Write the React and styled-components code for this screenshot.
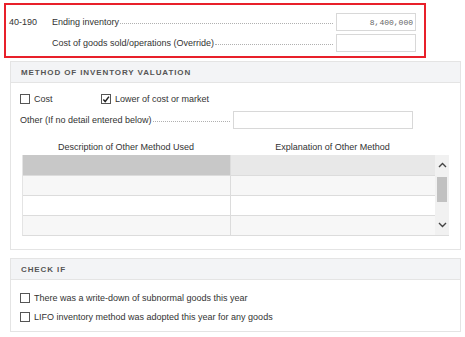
import React from "react";
import styled, { createGlobalStyle } from "styled-components";

const GlobalStyle = createGlobalStyle`
    body {
        margin: 0;
        background: #fff;
        font-family: "Liberation Sans", Arial, sans-serif;
        color: #333;
    }
`;

const tableRows = [
    { left: "#c8c8c8", right: "#e8e8e8" },
    { left: "#f7f7f7", right: "#f7f7f7" },
    { left: "#fff", right: "#fff" },
    { left: "#f7f7f7", right: "#f7f7f7" },
];

const CheckBox = ({ checked }) => (
    <Box>
        {checked && (
            <svg width="9" height="9" viewBox="0 0 9 9">
                <path
                    d="M1.5 4.5 L3.6 6.8 L7.8 1.2"
                    fill="none"
                    stroke="#222"
                    strokeWidth="1.6"
                />
            </svg>
        )}
    </Box>
);

const Chevron = ({ up }) => (
    <svg width="9" height="6" viewBox="0 0 9 6">
        <path
            d={up ? "M1 5 L4.5 1.5 L8 5" : "M1 1 L4.5 4.5 L8 1"}
            fill="none"
            stroke="#444"
            strokeWidth="1.4"
        />
    </svg>
);

const App = () => {
    return (
        <Page>
            <GlobalStyle />
            <Highlight>
                <LineRow>
                    <Code>40-190</Code>
                    <Label>
                        <span>Ending inventory</span>
                        <Leader />
                    </Label>
                    <Input value="8,400,000" readOnly />
                </LineRow>
                <LineRow>
                    <Code />
                    <Label>
                        <span>Cost of goods sold/operations (Override)</span>
                        <Leader />
                    </Label>
                    <Input value="" readOnly />
                </LineRow>
            </Highlight>

            <Panel>
                <PanelHeader>Method of inventory valuation</PanelHeader>
                <PanelBody>
                    <CheckRow>
                        <CheckItem width="81px">
                            <CheckBox />
                            Cost
                        </CheckItem>
                        <CheckItem>
                            <CheckBox checked />
                            Lower of cost or market
                        </CheckItem>
                    </CheckRow>
                    <OtherRow>
                        <Label>
                            <span>Other (If no detail entered below)</span>
                            <Leader />
                        </Label>
                        <Input wide value="" readOnly />
                    </OtherRow>
                    <Table>
                        <HeadRow>
                            <HeadCell>Description of Other Method Used</HeadCell>
                            <HeadCell>Explanation of Other Method</HeadCell>
                        </HeadRow>
                        <Grid>
                            <Rows>
                                {tableRows.map((row, i) => (
                                    <Row key={i}>
                                        <Cell bg={row.left} />
                                        <Cell bg={row.right} />
                                    </Row>
                                ))}
                            </Rows>
                            <Scrollbar>
                                <ScrollBtn>
                                    <Chevron up />
                                </ScrollBtn>
                                <Track>
                                    <Thumb />
                                </Track>
                                <ScrollBtn>
                                    <Chevron />
                                </ScrollBtn>
                            </Scrollbar>
                        </Grid>
                    </Table>
                </PanelBody>
            </Panel>

            <Panel>
                <PanelHeader>Check if</PanelHeader>
                <CheckBody>
                    <CheckItem>
                        <CheckBox />
                        There was a write-down of subnormal goods this year
                    </CheckItem>
                    <CheckItem>
                        <CheckBox />
                        LIFO inventory method was adopted this year for any goods
                    </CheckItem>
                </CheckBody>
            </Panel>
        </Page>
    );
};

export default App;

const Page = styled.div`
    width: 465px;
    padding: 3px 0 0 0;
    font-size: 9px;
`;

const Highlight = styled.div`
    box-sizing: border-box;
    margin-left: 4px;
    width: 422px;
    height: 55px;
    border: 2px solid #e8202a;
    padding: 8px 8px 0 3px;
    display: flex;
    flex-direction: column;
    gap: 3px;
`;

const LineRow = styled.div`
    display: grid;
    grid-template-columns: 43px 1fr 80px;
    align-items: center;
    height: 18px;
`;

const Code = styled.div`
    color: #333;
`;

const Label = styled.div`
    display: flex;
    align-items: baseline;
    white-space: nowrap;
    min-width: 0;
    padding-right: 3px;
`;

const Leader = styled.span`
    flex: 1;
    margin-left: 1px;
    border-bottom: 1px dotted #b0b0b0;
    transform: translateY(-1px);
`;

const Input = styled.input`
    box-sizing: border-box;
    width: ${(p) => (p.wide ? "180px" : "80px")};
    height: 18px;
    border: 1px solid #d8d8d8;
    background: #fff;
    padding: 0 2px 0 3px;
    text-align: right;
    font-family: "Liberation Mono", "Courier New", monospace;
    font-size: 8px;
    color: #666;
    outline: none;
`;

const Panel = styled.section`
    box-sizing: border-box;
    margin: 3px 0 8px 10px;
    width: 451px;
    border: 1px solid #e4e4e4;
`;

const PanelHeader = styled.div`
    height: 20px;
    display: flex;
    align-items: center;
    padding-left: 10px;
    background: #f3f4f6;
    border-bottom: 1px solid #e4e4e4;
    text-transform: uppercase;
    font-weight: bold;
    font-size: 8px;
    letter-spacing: 0.9px;
    color: #555;
`;

const PanelBody = styled.div`
    padding: 7px 11px 13px 9px;
`;

const CheckRow = styled.div`
    display: flex;
    align-items: center;
    height: 18px;
`;

const CheckItem = styled.label`
    display: flex;
    align-items: center;
    gap: 4px;
    height: 18px;
    width: ${(p) => p.width || "auto"};
`;

const Box = styled.span`
    box-sizing: border-box;
    width: 10px;
    height: 10px;
    border: 1px solid #555;
    background: #fff;
    display: inline-flex;
    align-items: center;
    justify-content: center;
`;

const OtherRow = styled.div`
    display: grid;
    grid-template-columns: 1fr 180px;
    align-items: center;
    margin-top: 3px;
    padding-right: 36px;
    height: 18px;
`;

const Table = styled.div`
    margin: 9px 0 0 2px;
`;

const HeadRow = styled.div`
    display: grid;
    grid-template-columns: 208px 205px;
    height: 17px;
    align-items: center;
`;

const HeadCell = styled.div`
    text-align: center;
    color: #333;
`;

const Grid = styled.div`
    display: flex;
    border-bottom: 1px solid #dcdcdc;
    border-left: 1px solid #e4e4e4;
`;

const Rows = styled.div`
    flex: 1;
`;

const Row = styled.div`
    box-sizing: border-box;
    display: grid;
    grid-template-columns: 207px 1fr;
    height: 20px;
    & + & {
        border-top: 1px solid #dcdcdc;
    }
`;

const Cell = styled.div`
    background: ${(p) => p.bg};
    & + & {
        border-left: 1px solid #dcdcdc;
    }
`;

const Scrollbar = styled.div`
    width: 14px;
    background: #f1f1f1;
    display: flex;
    flex-direction: column;
    align-items: center;
`;

const ScrollBtn = styled.div`
    height: 20px;
    display: flex;
    align-items: center;
    justify-content: center;
`;

const Track = styled.div`
    flex: 1;
    width: 100%;
    display: flex;
    justify-content: center;
`;

const Thumb = styled.div`
    width: 10px;
    height: 25px;
    margin-top: 2px;
    background: #c1c1c1;
`;

const CheckBody = styled.div`
    padding: 9px 9px 5px 9px;
    display: flex;
    flex-direction: column;
    gap: 1px;
`;
